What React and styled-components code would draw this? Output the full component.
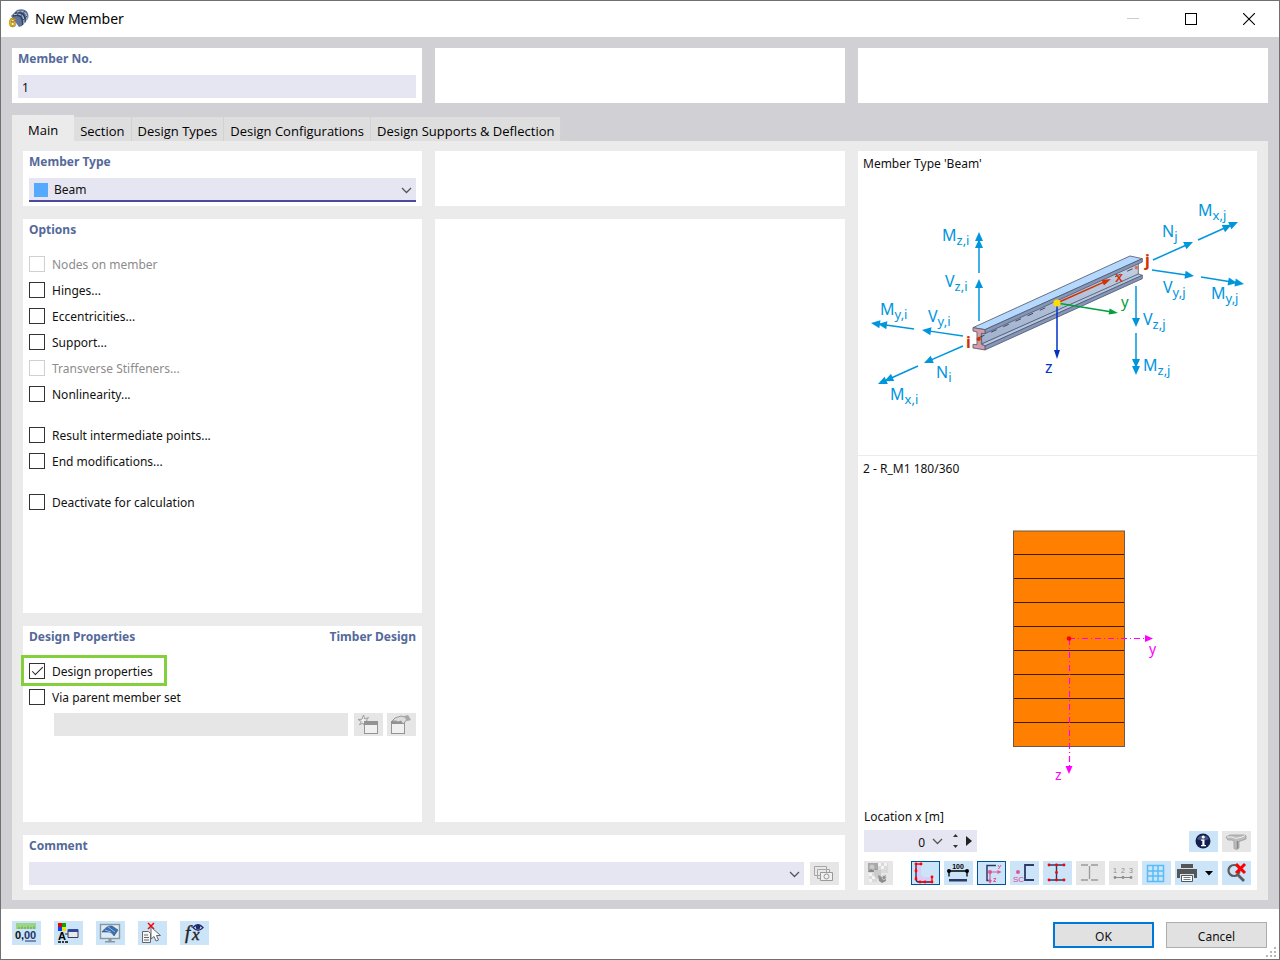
import React from "react";
import styled, { createGlobalStyle, css } from "styled-components";

const FONT = '"Noto Sans", "Open Sans", sans-serif';
const FIELD = "#e6e6f2";
const HEAD = "#54699a";
const AXIS_BLUE = "#0096de";

const GlobalStyle = createGlobalStyle`
  *, *::before, *::after { box-sizing: border-box; }
  body { margin: 0; background: #fff; color: #111; font: 400 12px/20px ${FONT}; }
  button, input, select { font: inherit; color: inherit; margin: 0; border: 0; padding: 0; border-radius: 0; }
  svg { display: block; }
`;

/* ---------- window ---------- */
const Window = styled.div`
  display: flex;
  flex-direction: column;
  min-height: 100vh;
  border: 1px solid #707070;
`;
const TitleBar = styled.header`
  display: flex;
  align-items: center;
  height: 36px;
  padding: 0 1px 0 8px;
  gap: 6px;
`;
const Title = styled.h1`
  flex: 1;
  margin: 0;
  font-size: 14px;
  font-weight: 400;
  color: #000;
`;
const WindowControls = styled.div`
  display: flex;
`;
const WindowButton = styled.button`
  display: grid;
  place-items: center;
  width: 58px;
  height: 34px;
  background: none;
`;
const Body = styled.main`
  flex: 1;
  display: flex;
  flex-direction: column;
  padding: 11px 11px 9px;
  background: #d0d0d5;
`;
const HeaderGrid = styled.div`
  display: grid;
  grid-template-columns: repeat(3, minmax(0, 1fr));
  grid-auto-rows: 55px;
  gap: 13px;
`;
const Panel = styled.section`
  grid-area: ${(p) => p.$area};
  min-width: 0;
  padding: 1px 6px;
  background: #fff;
`;
const PanelHead = styled.div`
  display: flex;
  justify-content: space-between;
  margin-bottom: 6px;
`;
const Heading = styled.h2`
  margin: 0;
  font-size: 12px;
  line-height: 20px;
  font-weight: 700;
  color: ${HEAD};
`;
const TextInput = styled.input`
  display: block;
  width: 100%;
  height: 23px;
  padding: 2px 4px 0;
  background: ${FIELD};
  outline: none;
`;

/* ---------- tabs ---------- */
const TabList = styled.div`
  display: flex;
  align-items: flex-end;
  height: 26px;
  margin-top: 12px;
`;
const Tab = styled.button`
  height: 24px;
  padding: 3px 6px 0;
  font-family: "Open Sans", "Noto Sans", sans-serif;
  font-size: 13px;
  color: #000;
  background: #dededf;
  border-right: 1px solid #d2d2d4;
  ${(p) =>
    p.$active &&
    css`
      height: 26px;
      padding: 4px 16px 0;
      background: #ebebeb;
      border-right: 0;
    `}
`;
const TabPanel = styled.div`
  flex: 1;
  display: grid;
  grid-template-columns: minmax(0, 399fr) minmax(0, 410fr) minmax(0, 399fr);
  grid-template-rows: 55px minmax(290px, 1fr) 196px 55px;
  grid-template-areas:
    "type blank side"
    "options middle side"
    "design middle side"
    "comment comment side";
  gap: 13px;
  padding: 10px 11px;
  background: #ebebeb;
`;

/* ---------- form parts ---------- */
const Combo = styled.div`
  position: relative;
  flex: 1;
  display: flex;
  align-items: center;
  height: ${(p) => (p.$focused ? 24 : 23)}px;
  background: ${FIELD};
  border-bottom: ${(p) => (p.$focused ? "2px solid #4d4a9e" : "0")};
`;
const Swatch = styled.span`
  width: 14px;
  height: 14px;
  margin: 1px 0 0 5px;
  background: #55aaff;
`;
const Select = styled.select`
  flex: 1;
  align-self: stretch;
  padding: 2px 24px 0 6px;
  appearance: none;
  background: transparent;
  outline: none;
`;
const ComboArrow = styled.svg`
  position: absolute;
  right: 4px;
  top: 9px;
  pointer-events: none;
`;
const CheckGroup = styled.div`
  margin-top: ${(p) => (p.$first ? 11 : 15)}px;
`;
const CheckRow = styled.div`
  display: flex;
  height: 26px;
`;
const CheckLabel = styled.label`
  position: relative;
  display: flex;
  align-items: center;
  gap: 7px;
  color: ${(p) => (p.$disabled ? "#8c8c8c" : "#111")};
  ${(p) =>
    p.$highlight &&
    css`
      &::after {
        content: "";
        position: absolute;
        inset: -3px -14px -2px -8px;
        border: 3px solid #84cf3c;
        pointer-events: none;
      }
    `}
`;
const CheckText = styled.span`
  padding-top: 2px;
`;
const CheckBox = styled.input`
  appearance: none;
  width: 16px;
  height: 16px;
  border: 1px solid #333;
  background: #fff;
  display: grid;
  place-items: center;
  &:disabled {
    border-color: #d0d0d0;
  }
  &:checked::before {
    content: "";
    width: 11px;
    height: 5px;
    margin-bottom: 4px;
    border: solid #222;
    border-width: 0 0 1px 1px;
    transform: rotate(-45deg);
  }
`;
const FieldRow = styled.div`
  display: flex;
  align-items: center;
  gap: ${(p) => p.$gap || 4}px;
  margin: ${(p) => (p.$indent ? "3px 0 0 25px" : "0")};
`;
const DisabledInput = styled.input`
  flex: 1;
  min-width: 0;
  height: 23px;
  margin-right: 2px;
  background: #e6e6e6;
`;
const IconButton = styled.button`
  display: grid;
  place-items: center;
  width: ${(p) => (p.$wide ? 43 : 29)}px;
  height: ${(p) => p.$h || 24}px;
  background: ${(p) => (p.disabled ? "#e6e6e6" : "#cce4f7")};
  border: ${(p) => (p.$pressed ? "1px solid #005499" : "0")};
  overflow: hidden;
`;

/* ---------- preview side ---------- */
const Side = styled.section`
  grid-area: side;
  display: flex;
  flex-direction: column;
  min-width: 0;
  background: #fff;
`;
const TypePreview = styled.div`
  padding: 3px 0 35px;
  border-bottom: 1px solid #ebebeb;
`;
const SectionPreview = styled.div`
  flex: 1;
  padding-top: 3px;
`;
const Caption = styled.p`
  margin: 0;
  padding: 0 5px;
`;
const Drawing = styled.svg`
  width: 100%;
  margin-top: ${(p) => p.$top}px;
  font-family: ${FONT};
`;
const Location = styled.div`
  padding: 0 6px 5px;
`;
const LocationRow = styled.div`
  display: flex;
  align-items: center;
  height: 22px;
  margin: 3px 0 9px;
  gap: 4px;
`;
const Toolbar = styled.div`
  display: flex;
  gap: 4px;
`;
const Grow = styled.span`
  flex: 1;
`;
const SpinField = styled.div`
  display: flex;
  align-items: center;
  width: 113px;
  height: 22px;
  background: ${FIELD};
`;
const SpinInput = styled.input`
  width: 61px;
  height: 22px;
  padding-top: 2px;
  text-align: right;
  background: transparent;
  outline: none;
`;
const SpinButton = styled.button`
  display: grid;
  place-items: center;
  width: ${(p) => p.$w}px;
  height: 22px;
  background: none;
`;

/* ---------- footer ---------- */
const Footer = styled.footer`
  position: relative;
  display: flex;
  align-items: center;
  gap: 13px;
  height: 50px;
  padding: 0 12px 2px 11px;
`;
const DialogButton = styled.button`
  width: 101px;
  height: 26px;
  margin-top: 3px;
  padding-top: ${(p) => (p.$primary ? 3 : 4)}px;
  background: #e1e1e1;
  border: ${(p) => (p.$primary ? "2px solid #0078d7" : "1px solid #adadad")};
  & + & {
    margin-left: -1px;
  }
`;
const Grip = styled.svg`
  position: absolute;
  right: 2px;
  bottom: 1px;
`;

/* ---------- drawings ---------- */
function Arrow({ from, to, color = AXIS_BLUE, double: twice, size = 9, half = 4 }) {
  const [x1, y1] = from;
  const [x2, y2] = to;
  const len = Math.hypot(x2 - x1, y2 - y1);
  const ux = (x2 - x1) / len;
  const uy = (y2 - y1) / len;
  const head = (back) => {
    const tx = x2 - ux * back;
    const ty = y2 - uy * back;
    const bx = tx - ux * size;
    const by = ty - uy * size;
    return `${tx},${ty} ${bx - uy * half},${by + ux * half} ${bx + uy * half},${by - ux * half}`;
  };
  return (
    <g fill={color} stroke="none">
      <line x1={x1} y1={y1} x2={x2 - ux * 6} y2={y2 - uy * 6} stroke={color} strokeWidth="1.5" />
      <polygon points={head(0)} />
      {twice && <polygon points={head(7)} />}
    </g>
  );
}

function ForceLabel({ x, y, main, sub }) {
  return (
    <text x={x} y={y} fontSize="16" fill={AXIS_BLUE}>
      {main}
      <tspan dy="4" fontSize="13">{sub}</tspan>
    </text>
  );
}

const forces = [
  { main: "M", sub: "z,i", at: [84, 51], from: [121, 83], to: [121, 42], double: true },
  { main: "V", sub: "z,i", at: [87, 97], from: [121, 131], to: [121, 89] },
  { main: "M", sub: "y,i", at: [22, 125], from: [56, 139], to: [13, 133], double: true },
  { main: "V", sub: "y,i", at: [70, 132], from: [105, 146], to: [64, 140] },
  { main: "N", sub: "i", at: [78, 188], from: [105, 156], to: [66, 173] },
  { main: "M", sub: "x,i", at: [32, 210], from: [60, 176], to: [20, 194], double: true },
  { main: "M", sub: "x,j", at: [340, 26], from: [340, 50], to: [380, 32], double: true },
  { main: "N", sub: "j", at: [304, 47], from: [295, 70], to: [335, 52] },
  { main: "V", sub: "y,j", at: [305, 103], from: [294, 80], to: [336, 86] },
  { main: "M", sub: "y,j", at: [353, 109], from: [343, 87], to: [386, 94], double: true },
  { main: "V", sub: "z,j", at: [285, 135], from: [278, 96], to: [278, 137] },
  { main: "M", sub: "z,j", at: [285, 181], from: [278, 143], to: [278, 185], double: true },
];

function BeamDrawing() {
  return (
    <Drawing $top={16} viewBox="0 0 399 230" role="img" aria-label="Beam with end forces">
      <defs>
        <linearGradient id="web" x1="0" y1="0" x2="0" y2="1">
          <stop offset="0" stopColor="#c3d0e4" />
          <stop offset="1" stopColor="#9fb0ce" />
        </linearGradient>
      </defs>
      <g transform="translate(-3 0) scale(0.3333)" stroke="#565d70" strokeWidth="2.6" strokeLinejoin="round">
        <polygon points="380,428 850,216 850,254 380,462" fill="url(#web)" />
        <polygon points="354,413 825,198 862,206 390,419" fill="#b5d8ff" />
        <polygon points="390,419 862,206 862,216 390,431" fill="#8497ba" />
        <polygon points="380,462 850,252 862,256 390,468" fill="#b4c6e2" />
        <polygon points="390,468 862,256 862,266 390,480" fill="#8497ba" />
        <polygon
          points="354,413 390,419 390,431 379,430 379,463 390,468 390,480 354,474 354,463 366,464 366,426 354,423"
          fill="#d59ca8"
        />
        <line x1="372" y1="443" x2="590" y2="345" strokeDasharray="18 22" stroke="#333" />
        <line x1="780" y1="260" x2="845" y2="231" strokeDasharray="18 22" stroke="#333" />
        <circle cx="371" cy="447" r="5" fill="#d23200" stroke="#d23200" />
        <circle cx="844" cy="233" r="4" fill="#e0694a" stroke="#e0694a" />
      </g>
      {forces.map((f) => (
        <g key={f.main + f.sub}>
          <Arrow from={f.from} to={f.to} double={f.double} />
          <ForceLabel x={f.at[0]} y={f.at[1]} main={f.main} sub={f.sub} />
        </g>
      ))}
      <Arrow from={[199, 113]} to={[253, 89]} color="#d23200" half={3} />
      <Arrow from={[199, 113]} to={[260, 123]} color="#00a03c" half={3} />
      <Arrow from={[199, 113]} to={[199, 169]} color="#0032c8" half={3} />
      <circle cx="199" cy="113" r="3.6" fill="#ffdc00" />
      <text x="257" y="92" fontSize="15" fontWeight="500" fill="#d23200">x</text>
      <text x="263" y="117" fontSize="15" fill="#00a03c">y</text>
      <text x="187" y="183" fontSize="16" fill="#0032c8">z</text>
      <text x="108" y="158" fontSize="16" fontWeight="700" fill="#d23200">i</text>
      <text x="287" y="76" fontSize="16" fontWeight="700" fill="#d23200">j</text>
    </Drawing>
  );
}

function SectionDrawing() {
  const layers = Array.from({ length: 8 }, (_, i) => 50.5 + 24 * (i + 1));
  return (
    <Drawing $top={1} viewBox="0 0 399 320" role="img" aria-label="Timber cross-section">
      <rect x="155.5" y="51" width="111" height="215.500" fill="#ff8000" stroke="#6b5a48" />
      {layers.map((y) => (
        <line key={y} x1="156" x2="266" y1={y} y2={y} stroke="#3a1e00" strokeWidth="1.2" />
      ))}
      <g stroke="#ff00ff" strokeWidth="1.2" strokeDasharray="6 3 1 3">
        <line x1="211" y1="158.5" x2="288" y2="158.5" />
        <line x1="211.500" y1="159" x2="211.500" y2="286" />
      </g>
      <g fill="#ff00ff">
        <polygon points="295,158.5 287,155 287,162" />
        <polygon points="211,294 207.5,286 214.5,286" />
        <text x="291" y="174" fontSize="14">y</text>
        <text x="197" y="300" fontSize="14">z</text>
      </g>
      <circle cx="211" cy="158.5" r="2.3" fill="#f00" />
    </Drawing>
  );
}

function Glyph({ children, w = 29, h = 24 }) {
  return (
    <svg width={w} height={h} viewBox={`0 0 ${w} ${h}`} fill="none" aria-hidden="true">
      {children}
    </svg>
  );
}
const Dots = ({ at, fill = "#f00", r = 1.4 }) =>
  at.map(([x, y]) => <circle key={`${x}-${y}`} cx={x} cy={y} r={r} fill={fill} />);

const Chevron = () => (
  <ComboArrow width="11" height="7" viewBox="0 0 11 7" fill="none" stroke="#555" strokeWidth="1.3">
    <path d="M1 1l4.5 4.5L10 1" />
  </ComboArrow>
);

const AppIcon = () => (
  <svg width="20" height="20" viewBox="0 0 20 20" aria-hidden="true">
    <path d="M2 7L8 1q6-2 9.500 1 3 3 1.500 7.500L13 17l-3 1z" fill="#5f7599" />
    <path d="M4 7q5-2 8 1 2 3 1.500 8M6 4.500q5-2 8.500 1 2 3 1.500 8" fill="none" stroke="#2f405f" strokeWidth="1.400" />
    <path d="M5 5.700q5-2 8.500 1 2 3 1.500 8M8 3q5-2 8.500 1 2 3 1.500 7" fill="none" stroke="#b7c7dd" />
    <path d="M7 7l5-5.500M11 8l5-6M14 11l4-4" stroke="#2f405f" strokeWidth=".8" />
    <text x="0" y="18" fontSize="13" fontWeight="700" fill="#ecc11c" stroke="#8c6b00" strokeWidth=".5" fontFamily="Liberation Sans">6</text>
  </svg>
);

const NewIcon = () => (
  <Glyph h={23}>
    <path d="M9.500 2l1.300 4 3.700-1.500-2.300 3 3.300 1.700-4 .3-.7 4-1.800-3.500-3.500 1.800 1.800-3.300L4 6.500l4-.3z" stroke="#a0a0a0" fill="#eee" />
    <rect x="10.500" y="9.500" width="13" height="11" fill="#f0f0f0" stroke="#949494" />
    <rect x="10" y="8" width="14" height="4" fill="#929292" />
  </Glyph>
);
const EditIcon = () => (
  <Glyph h={23}>
    <rect x="4.500" y="8.500" width="13" height="12" fill="#f0f0f0" stroke="#949494" />
    <rect x="4" y="8" width="14" height="3" fill="#929292" />
    <path d="M5 8l3-3 6-2 4 1 2 2-2 3-2 2-2-3-3 1-2-1z" fill="#dcdcdc" stroke="#9a9a9a" />
    <path d="M17 3l4-1 3 5-4 1z" fill="#a8a8a8" />
  </Glyph>
);
const CopyCommentIcon = () => (
  <Glyph h={23}>
    <path d="M4.500 4.500h12v9h-12zM7.500 7.500h12v9h-12z" fill="#e8e8e8" stroke="#a6a6a6" />
    <path d="M10.500 10.500h12v8h-12z" fill="#f1f1f1" stroke="#999" />
    <circle cx="16.500" cy="14.500" r="2.500" stroke="#999" />
  </Glyph>
);
const InfoIcon = () => (
  <Glyph h={21}>
    <circle cx="14" cy="10" r="7.500" fill="#14204e" />
    <path d="M8 8a6.500 5.500 0 0 1 12 0q-6 3-12 0" fill="#5a6a9c" opacity=".7" />
    <circle cx="14.200" cy="6" r="1.600" fill="#fff" />
    <path d="M12 8.500h3.500V14H17v1.300h-5V14h1.300v-4.200H12z" fill="#fff" />
  </Glyph>
);
const BeamIcon = () => (
  <Glyph h={21}>
    <path d="M4 6l4-2h15l1 1v3l-4 1.500-3 1V17l-2 1.500-3-1V10l-2-1H6z" fill="#bcbcbc" stroke="#9c9c9c" strokeWidth=".8" />
    <path d="M5 6h5l4 1.500L20 6l3-1.500" stroke="#eee" />
    <path d="M15.500 10v7.500" stroke="#888" strokeWidth="1.500" />
  </Glyph>
);
const PictureIcon = () => (
  <Glyph>
    <path d="M14 2h10v10H14zM5 11h8v10H5z" fill="#dadada" />
    <path d="M14 2h3v3h-3zM20 2h3v3h-3zM17 5h3v3h-3zM5 12h3v3H5zM8 15h3v3H8zM5 18h3v3H5z" fill="#f4f4f4" />
    <path d="M4 2h10v9H4z" fill="#a9a9a9" />
    <circle cx="8" cy="6" r="2.500" fill="#c9c9c9" />
    <path d="M4 11l3-3 3 2 2-2 2 3z" fill="#888" />
    <path d="M10 9h7v6l-3 3-4-3z" fill="#cbcbcb" />
    <path d="M14 14l4 2 4-2v6l-4 2-3-2z" fill="#8d8d8d" />
    <circle cx="20" cy="16.500" r="2" stroke="#c9c9c9" />
  </Glyph>
);
const OutlineIcon = () => (
  <Glyph w={27} h={22}>
    <path d="M4 2h5v9q0 4 4 4h7v5H6q-2 0-2-2z" fill="#d9ccf7" />
    <path d="M4 2v15q0 3 3 3h13" stroke="#1c2c5c" strokeWidth="1.300" />
    <path d="M4 2h5M20 15v5M4 6v4M4 14v4M10 20h3M17 20h3" stroke="#ff1010" strokeWidth="1.300" />
    <Dots at={[[4, 2], [9, 2], [4, 9], [4, 17], [8, 20], [13, 20], [20, 20], [20, 15]]} />
  </Glyph>
);
const DimensionIcon = () => (
  <Glyph>
    <text x="14" y="8" fontSize="7" fontWeight="700" textAnchor="middle" fill="#000" fontFamily="Liberation Sans">100</text>
    <path d="M5 10h18M5 10v5.500M23 10v5.500" stroke="#000" strokeWidth="1.300" />
    <Dots at={[[5, 10], [23, 10]]} fill="#000" r={2} />
    <path d="M5 18h18v2.500H5z" fill="#2d3a66" />
  </Glyph>
);
const AxesIcon = () => (
  <Glyph w={27} h={22}>
    <path d="M18 3.500H9v15h4" stroke="#2d3a66" strokeWidth="1.500" />
    <path d="M12 10h9M12 10v9" stroke="#e0559a" strokeWidth="1.200" />
    <path d="M23.500 10l-4-2v4zM12 22l-2-4h4z" fill="#e0559a" />
    <Dots at={[[12, 10]]} fill="#e0559a" r={2} />
    <path d="M20 3l1.500 2.500L23 3M21.500 5.500L20.500 7M15.500 16.500h2.500l-2.500 3H18" stroke="#e0559a" />
  </Glyph>
);
const ShearCenterIcon = () => (
  <Glyph>
    <path d="M24 4h-9v15h9" stroke="#2d3a66" strokeWidth="1.800" />
    <Dots at={[[8, 11]]} fill="#e0559a" r={2} />
    <text x="3" y="21" fontSize="8" fill="#e0409a" fontFamily="Liberation Sans">SC</text>
  </Glyph>
);
const IShapeIcon = () => (
  <Glyph>
    <path d="M6 4h16M6 19h16M13.500 4v15" stroke="#2d3a66" strokeWidth="1.400" />
    <Dots at={[[6, 4], [13.5, 4], [21, 4], [13.5, 11.5], [6, 19], [13.5, 19], [21, 19]]} />
  </Glyph>
);
const IPartsIcon = () => (
  <Glyph>
    <path d="M5 4h7M15 4h7M5 19h7M15 19h7M13.500 5v13" stroke="#9a9a9a" strokeWidth="1.300" />
  </Glyph>
);
const NumberingIcon = () => (
  <Glyph>
    <g fill="#8c8c8c" fontSize="7" fontFamily="Liberation Sans" textAnchor="middle">
      <text x="6" y="12">1</text>
      <text x="14" y="12">2</text>
      <text x="22" y="12">3</text>
    </g>
    <path d="M5 16.500h18" stroke="#8c8c8c" />
    <Dots at={[[6, 16.5], [14, 16.5], [22, 16.5]]} fill="#8c8c8c" />
  </Glyph>
);
const GridIcon = () => (
  <Glyph>
    <path d="M5.500 4.500h16v16h-16zM11 4v17M16 4v17M5 10h17M5 15h17" stroke="#55bdf9" strokeWidth="1.500" />
  </Glyph>
);
const PrinterIcon = () => (
  <Glyph w={43}>
    <path d="M6 3h12v4H6zM2 8h20v9h-3v-4H5v4H2z" fill="#555" />
    <path d="M6.500 14.500h11v6h-11z" fill="#fff" stroke="#555" />
    <path d="M8.500 16.500h7M8.500 18.500h7" stroke="#777" />
    <path d="M30 10h8l-4 4.500z" fill="#000" />
  </Glyph>
);
const ResetZoomIcon = () => (
  <Glyph>
    <circle cx="12" cy="9.500" r="5.500" stroke="#5c5c5c" strokeWidth="2.200" />
    <path d="M16 14l6 6" stroke="#5c5c5c" strokeWidth="2.800" />
    <path d="M14 3l9 9M23 3l-9 9" stroke="#f00" strokeWidth="3" />
  </Glyph>
);
const UnitsIcon = () => (
  <Glyph>
    <path d="M4 2h20v6H4z" fill="#9bd585" />
    <path d="M7 8V6M10 8V5.500M13 8V6M16 8V5.500M19 8V6M22 8V5.500" stroke="#5da348" />
    <text x="3" y="18" fontSize="11" fontWeight="700" fill="#111" fontFamily="Liberation Sans">0,</text>
    <text x="12" y="18" fontSize="11" fontWeight="700" fill="#24356e" fontFamily="Liberation Sans">00</text>
    <path d="M13 20h11" stroke="#24356e" />
  </Glyph>
);
const DisplayIcon = () => (
  <Glyph>
    <path d="M4 2h4v4H4z" fill="#e00" />
    <path d="M8 2h4v4H8z" fill="#0a0" />
    <path d="M4 6h4v4H4z" fill="#04f" />
    <path d="M8 6h4v4H8z" fill="#fd0" />
    <text x="4" y="19" fontSize="11" fontWeight="700" fill="#000" fontFamily="Liberation Sans">A</text>
    <path d="M4 21h3M8 21h2M11 21h3" stroke="#000" strokeWidth="1.500" />
    <path d="M11 13h4" stroke="#333" />
    <path d="M14 8.500h10v8H14z" fill="#e9e9e9" stroke="#333d66" />
    <path d="M14 8h10v3H14z" fill="#2c4a9c" />
  </Glyph>
);
const ScreenIcon = () => (
  <Glyph>
    <rect x="4.500" y="3.500" width="19" height="14" fill="#dcebf7" stroke="#8c949c" strokeWidth="1.400" />
    <path d="M6 11q5-7 10-6l6 4-4 6q-2-4-5-4z" fill="#3a6fae" stroke="#28507f" strokeWidth=".6" />
    <path d="M9 9l6 2M12 6l7 5" stroke="#93b7de" />
    <path d="M12.500 18h3v2.500h-3zM9 20h10v1.500H9z" fill="#8c949c" />
  </Glyph>
);
const PickIcon = () => (
  <Glyph>
    <path d="M10 2l6 6M16 2l-6 6" stroke="#f00" strokeWidth="1.500" />
    <path d="M4.500 10.500h6l2 2v9h-8z" fill="#f5f5f5" stroke="#666" />
    <path d="M6 14h4M6 16.500h5M6 19h5" stroke="#666" />
    <path d="M13 6v12l3-2.500 2 4.500 2.500-1-2-4.500h4z" fill="#fff" stroke="#666" />
  </Glyph>
);
const FormulaIcon = () => (
  <Glyph>
    <text x="5" y="18" fontSize="19" fontStyle="italic" fill="#222" stroke="#222" strokeWidth=".4" fontFamily="Liberation Serif">f</text>
    <text x="12" y="19" fontSize="17" fontStyle="italic" fill="#222" stroke="#222" strokeWidth=".4" fontFamily="Liberation Serif">x</text>
    <path d="M13 6.500q5-5.500 10 0-5 5.500-10 0z" fill="#e8effa" stroke="#1f2b6b" strokeWidth="1.300" />
    <circle cx="18" cy="6" r="2.400" fill="#1f2b6b" />
  </Glyph>
);

/* ---------- page ---------- */
const optionGroups = [
  [
    ["Nodes on member", true],
    ["Hinges..."],
    ["Eccentricities..."],
    ["Support..."],
    ["Transverse Stiffeners...", true],
    ["Nonlinearity..."],
  ],
  [["Result intermediate points..."], ["End modifications..."]],
  [["Deactivate for calculation"]],
];

function Check({ label, disabled, checked, highlight }) {
  return (
    <CheckRow>
      <CheckLabel $disabled={disabled} $highlight={highlight}>
        <CheckBox type="checkbox" disabled={disabled} defaultChecked={checked} />
        <CheckText>{label}</CheckText>
      </CheckLabel>
    </CheckRow>
  );
}

const sectionTools = [
  ["Outline", OutlineIcon, { $pressed: true }],
  ["Dimensions", DimensionIcon],
  ["Axes", AxesIcon, { $pressed: true }],
  ["Shear center", ShearCenterIcon],
  ["Stress points", IShapeIcon],
  ["Section parts", IPartsIcon, { disabled: true }],
  ["Numbering", NumberingIcon, { disabled: true }],
  ["Grid", GridIcon],
  ["Print", PrinterIcon, { $wide: true }],
  ["Reset zoom", ResetZoomIcon],
];
const dialogTools = [
  ["Units", UnitsIcon],
  ["Display properties", DisplayIcon],
  ["Screen", ScreenIcon],
  ["Pick", PickIcon],
  ["Formula", FormulaIcon],
];
const tabs = ["Main", "Section", "Design Types", "Design Configurations", "Design Supports & Deflection"];

export default function App() {
  return (
    <Window>
      <GlobalStyle />
      <TitleBar>
        <AppIcon />
        <Title>New Member</Title>
        <WindowControls>
          <WindowButton aria-label="Minimize" disabled>
            <svg width="12" height="12"><path d="M0 5.500h12" stroke="#ccc" /></svg>
          </WindowButton>
          <WindowButton aria-label="Maximize">
            <svg width="12" height="12"><rect x=".5" y=".5" width="11" height="11" fill="none" stroke="#000" /></svg>
          </WindowButton>
          <WindowButton aria-label="Close">
            <svg width="12" height="12"><path d="M0 0l12 12M12 0L0 12" stroke="#000" strokeWidth="1.100" /></svg>
          </WindowButton>
        </WindowControls>
      </TitleBar>

      <Body>
        <HeaderGrid>
          <Panel>
            <PanelHead>
              <Heading as="label" htmlFor="member-no">Member No.</Heading>
            </PanelHead>
            <TextInput id="member-no" defaultValue="1" />
          </Panel>
          <Panel />
          <Panel />
        </HeaderGrid>

        <TabList role="tablist">
          {tabs.map((t, i) => (
            <Tab key={t} role="tab" aria-selected={i === 0} $active={i === 0}>{t}</Tab>
          ))}
        </TabList>

        <TabPanel role="tabpanel">
          <Panel $area="type">
            <PanelHead>
              <Heading as="label" htmlFor="member-type">Member Type</Heading>
            </PanelHead>
            <Combo $focused>
              <Swatch />
              <Select id="member-type" defaultValue="Beam">
                <option>Beam</option>
              </Select>
              <Chevron />
            </Combo>
          </Panel>
          <Panel $area="blank" />
          <Panel $area="options">
            <Heading>Options</Heading>
            {optionGroups.map((group, g) => (
              <CheckGroup key={g} $first={g === 0}>
                {group.map(([label, disabled]) => (
                  <Check key={label} label={label} disabled={disabled} />
                ))}
              </CheckGroup>
            ))}
          </Panel>
          <Panel $area="middle" />
          <Panel $area="design">
            <PanelHead>
              <Heading>Design Properties</Heading>
              <Heading>Timber Design</Heading>
            </PanelHead>
            <CheckGroup $first>
              <Check label="Design properties" checked highlight />
              <Check label="Via parent member set" />
            </CheckGroup>
            <FieldRow $indent>
              <DisabledInput disabled aria-label="Parent member set" />
              <IconButton $h={23} disabled aria-label="New"><NewIcon /></IconButton>
              <IconButton $h={23} disabled aria-label="Edit"><EditIcon /></IconButton>
            </FieldRow>
          </Panel>
          <Panel $area="comment">
            <PanelHead>
              <Heading as="label" htmlFor="comment">Comment</Heading>
            </PanelHead>
            <FieldRow $gap={6}>
              <Combo>
                <Select id="comment" />
                <Chevron />
              </Combo>
              <IconButton $h={23} disabled aria-label="Comments"><CopyCommentIcon /></IconButton>
            </FieldRow>
          </Panel>

          <Side>
            <TypePreview>
              <Caption>Member Type 'Beam'</Caption>
              <BeamDrawing />
            </TypePreview>
            <SectionPreview>
              <Caption>2 - R_M1 180/360</Caption>
              <SectionDrawing />
            </SectionPreview>
            <Location>
              <label htmlFor="location">Location x [m]</label>
              <LocationRow>
                <SpinField>
                  <SpinInput id="location" defaultValue="0" />
                  <SpinButton $w={25} aria-label="Choose location">
                    <svg width="11" height="7" fill="none" stroke="#555" strokeWidth="1.300"><path d="M1 1l4.500 4.500L10 1" /></svg>
                  </SpinButton>
                  <SpinButton $w={11} aria-label="Step location">
                    <svg width="5" height="14" fill="#333"><path d="M0 3h5L2.500 0zM0 11h5l-2.500 3z" /></svg>
                  </SpinButton>
                  <SpinButton $w={16} aria-label="Next location">
                    <svg width="6" height="10" fill="#222"><path d="M0 0v10l6-5z" /></svg>
                  </SpinButton>
                </SpinField>
                <Grow />
                <IconButton $h={21} aria-label="Information"><InfoIcon /></IconButton>
                <IconButton $h={21} disabled aria-label="Section view"><BeamIcon /></IconButton>
              </LocationRow>
              <Toolbar>
                <IconButton disabled aria-label="Rendering"><PictureIcon /></IconButton>
                <Grow />
                {sectionTools.map(([name, Icon, props]) => (
                  <IconButton key={name} aria-label={name} {...props}><Icon /></IconButton>
                ))}
              </Toolbar>
            </Location>
          </Side>
        </TabPanel>
      </Body>

      <Footer>
        {dialogTools.map(([name, Icon]) => (
          <IconButton key={name} aria-label={name}><Icon /></IconButton>
        ))}
        <Grow />
        <DialogButton $primary>OK</DialogButton>
        <DialogButton>Cancel</DialogButton>
        <Grip width="11" height="11" fill="#b8b8b8" aria-hidden="true">
          <path d="M8 0h2v2H8zM8 4h2v2H8zM8 8h2v2H8zM4 4h2v2H4zM4 8h2v2H4zM0 8h2v2H0z" />
        </Grip>
      </Footer>
    </Window>
  );
}
